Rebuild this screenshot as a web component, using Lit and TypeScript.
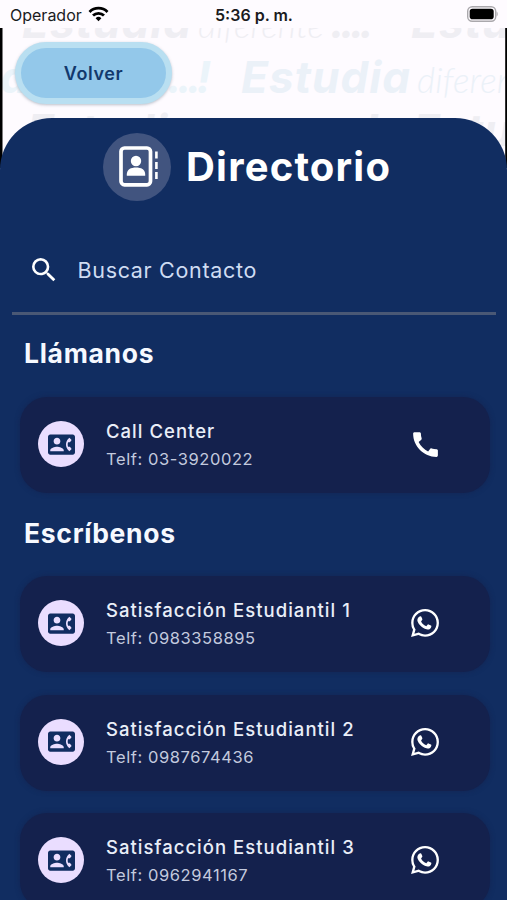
import { LitElement, html, svg, css } from "lit";
import { customElement, property } from "lit/decorators.js";

interface Contact {
  name: string;
  phone: string;
  kind: "call" | "whatsapp";
}

const CALLS: Contact[] = [{ name: "Call Center", phone: "03-3920022", kind: "call" }];

const CHATS: Contact[] = [
  { name: "Satisfacción Estudiantil 1", phone: "0983358895", kind: "whatsapp" },
  { name: "Satisfacción Estudiantil 2", phone: "0987674436", kind: "whatsapp" },
  { name: "Satisfacción Estudiantil 3", phone: "0962941167", kind: "whatsapp" },
];

const contactPhone = html`<svg width="30" height="30" viewBox="0 0 24 24" fill="#112d61">
  <path d="M22 3H2C.9 3 0 3.9 0 5v14c0 1.100.9 2 2 2h20c1.100 0 1.990-.9 1.990-2L24 5c0-1.100-.9-2-2-2zM8 6c1.660 0 3 1.340 3 3s-1.340 3-3 3-3-1.340-3-3 1.340-3 3-3zm6 12H2v-1c0-2 4-3.100 6-3.100s6 1.100 6 3.100v1zm3.850-4h1.640L21 16l-1.990 1.990c-1.310-.98-2.280-2.380-2.730-3.990-.18-.64-.28-1.310-.28-2s.1-1.360.28-2c.45-1.620 1.420-3.010 2.730-3.990L21 8l-1.510 2h-1.640c-.22.63-.35 1.300-.35 2s.13 1.370.35 2z"/>
</svg>`;

const callIcon = html`<svg width="33" height="33" viewBox="0 0 24 24" fill="#fff">
  <path d="M20.010 15.380c-1.230 0-2.420-.2-3.530-.56-.35-.12-.74-.03-1.010.24l-1.570 1.970c-2.830-1.350-5.480-3.900-6.890-6.830l1.950-1.660c.27-.28.35-.67.24-1.020-.37-1.110-.56-2.300-.56-3.530 0-.54-.45-.99-.99-.99H4.190C3.650 3 3 3.240 3 3.990 3 13.280 10.730 21 20.010 21c.71 0 .99-.63.99-1.180v-3.450c0-.54-.45-.99-.99-.99z"/>
</svg>`;

const whatsappIcon = html`<svg width="28" height="28" viewBox="0 0 24 24" fill="#fff">
  <path d="M.057 24l1.687-6.163a11.867 11.867 0 0 1-1.587-5.946C.160 5.335 5.495 0 12.050 0a11.817 11.817 0 0 1 8.413 3.488 11.824 11.824 0 0 1 3.480 8.414c-.003 6.557-5.338 11.892-11.893 11.892a11.900 11.900 0 0 1-5.688-1.448L.057 24zm6.597-3.807c1.676.995 3.276 1.591 5.392 1.592 5.448 0 9.886-4.434 9.889-9.885.002-5.462-4.415-9.890-9.881-9.892-5.452 0-9.887 4.434-9.889 9.884-.001 2.225.651 3.891 1.746 5.634l-.999 3.648 3.742-.981z"/>
  <path d="M8 6.200c.35-.1.700.050.850.400l.85 2.050c.1.300.050.550-.15.800l-.8 1c-.1.150-.1.300 0 .5.900 1.700 2.200 2.900 3.950 3.700.2.100.4.050.55-.1l1-1.150c.2-.25.450-.3.750-.2l2.050.950c.3.150.45.4.4.750-.2 1.800-1.700 2.800-3.300 2.650-1-.1-2.350-.5-3.900-1.500-2-1.300-3.700-3.200-4.500-5.100C4.950 8.800 6.300 6.600 8 6.200z"/>
</svg>`;

@customElement("contact-card")
export class ContactCard extends LitElement {
  @property({ attribute: false }) contact!: Contact;

  static styles = css`
    :host {
      display: block;
    }
    .card {
      box-sizing: border-box;
      height: 96px;
      display: flex;
      align-items: center;
      padding: 0 48px 2px 18px;
      border-radius: 27px;
      background: #14214d;
      box-shadow: 0 0 4px 1px rgba(20, 33, 77, 0.5);
    }
    .avatar {
      flex: none;
      width: 46px;
      height: 46px;
      border-radius: 50%;
      background: #eaddff;
      display: grid;
      place-items: center;
    }
    .avatar svg {
      width: 27px;
      height: 27px;
    }
    .text {
      flex: 1;
      margin-left: 22px;
      padding-top: 3px;
      white-space: nowrap;
    }
    .name {
      font-size: 18.500px;
      line-height: 28px;
      font-weight: 500;
      letter-spacing: 1.020px;
      color: #e9eef8;
    }
    .phone {
      font-size: 16.500px;
      line-height: 29px;
      letter-spacing: 0.580px;
      color: #c3cade;
    }
    .action {
      flex: none;
      width: 34px;
      height: 34px;
      display: grid;
      place-items: center;
    }
  `;

  render() {
    const c = this.contact;
    return html`<div class="card">
      <div class="avatar">${contactPhone}</div>
      <div class="text">
        <div class="name">${c.name}</div>
        <div class="phone">Telf: ${c.phone}</div>
      </div>
      <div class="action">${c.kind === "call" ? callIcon : whatsappIcon}</div>
    </div>`;
  }
}

const slogan = (x: number, y: number, fill: string) => svg`
  <g fill=${fill} font-style="italic">
    <text x=${x} y=${y} font-family="Inter" font-size="44" font-weight="700" textLength="169">Estudia</text>
    <text x=${x + 176} y=${y} font-size="35" font-weight="300" textLength="126">diferente</text>
    <text x=${x + 308} y=${y} font-family="Inter" font-size="44" font-weight="700" textLength="44">...!</text>
  </g>`;

@customElement("app-root")
export class AppRoot extends LitElement {
  static styles = css`
    :host {
      display: block;
      width: 507px;
      height: 900px;
      overflow: hidden;
      font-family: Inter, "Liberation Sans", sans-serif;
    }
    .screen {
      height: 900px;
      display: flex;
      flex-direction: column;
      position: relative;
      background: #fefbff;
    }
    .status {
      flex: none;
      height: 28px;
      box-sizing: border-box;
      padding: 2px 9px 0 10px;
      display: grid;
      grid-template-columns: 1fr auto 1fr;
      align-items: center;
      color: #1b1b1e;
      font-size: 16px;
      line-height: 26px;
    }
    .carrier {
      display: flex;
      align-items: center;
      gap: 6px;
    }
    .carrier svg {
      margin-top: -2px;
    }
    .clock {
      font-weight: 600;
    }
    .battery {
      justify-self: end;
      display: flex;
      margin-top: -2px;
    }
    .backdrop {
      position: absolute;
      left: 0;
      top: 28px;
      font-family: Lato, "Open Sans", sans-serif;
    }
    .toolbar {
      flex: none;
      position: relative;
      height: 90px;
      box-sizing: border-box;
      padding: 14px 0 0 15px;
    }
    .back {
      width: 157px;
      height: 62px;
      box-sizing: border-box;
      border: 6px solid #b9dff1;
      border-radius: 31px;
      background: #93c8ea;
      box-shadow: 0 1px 3px rgba(60, 80, 100, 0.35);
      font: 600 18px/50px Inter, sans-serif;
      letter-spacing: 0.6px;
      color: #12396d;
      padding: 1px 0 0;
    }
    .panel {
      flex: 1;
      min-height: 0;
      overflow: hidden;
      position: relative;
      background: #112d61;
      border-radius: 52px 52px 0 0;
    }
    .heading {
      display: flex;
      align-items: center;
      gap: 15px;
      margin: 15px 0 0 103px;
    }
    .badge {
      width: 68px;
      height: 68px;
      border-radius: 50%;
      background: #41547f;
      display: flex;
    }
    .heading h1 {
      margin: 0;
      font-size: 40px;
      line-height: 68px;
      font-weight: 650;
      letter-spacing: 1.200px;
      color: #fff;
    }
    .search {
      box-sizing: border-box;
      height: 87px;
      margin: 27px 11px 0 12px;
      border-bottom: 3px solid #4a5875;
      padding-left: 16px;
      display: flex;
      align-items: center;
      gap: 17.500px;
      font-size: 21.500px;
      letter-spacing: 0.680px;
      color: #cfdcf2;
    }
    .search svg {
      flex: none;
      margin-top: -1px;
    }
    h2 {
      margin: 0 0 0 24px;
      font-size: 26.500px;
      line-height: 32px;
      font-weight: 650;
      letter-spacing: 0.700px;
      color: #f6f9ff;
    }
    .calls-title {
      margin-top: 22px;
    }
    .chats-title {
      margin-top: 24px;
    }
    .list {
      display: flex;
      flex-direction: column;
      gap: 22.700px;
      margin: 28px 17px 0 20px;
    }
    .chats {
      margin-top: 27px;
    }
  `;

  render() {
    return html`<div class="screen">
      <div class="status">
        <div class="carrier">
          <span>Operador</span>
          <svg width="21" height="16" viewBox="0 0 21 16" fill="none" stroke="#000" stroke-width="2.800">
            <path d="M1.500 5.900a12.800 12.800 0 0 1 18 0" />
            <path d="M5 9.600a7.800 7.800 0 0 1 11 0" />
            <path d="M10.500 15.200l-2.900-3a4.100 4.100 0 0 1 5.800 0z" fill="#000" stroke="none" />
          </svg>
        </div>
        <div class="clock">5:36 p. m.</div>
        <svg class="battery" width="33" height="16" viewBox="0 0 33 16">
          <rect x="2.700" y=".8" width="28" height="14.400" rx="4.500" fill="none" stroke="#aaa8ac" stroke-width="1.400" />
          <rect x="4.700" y="2.800" width="24" height="10.400" rx="2.800" fill="#000" />
          <path d="M31.600 5.600c1.500.7 1.500 4.100 0 4.800z" fill="#aaa8ac" />
        </svg>
      </div>
      <svg class="backdrop" width="507" height="140" viewBox="0 28 507 140">
        ${slogan(22, 38, "#efeef3")} ${slogan(411, 38, "#efeef3")}
        ${slogan(-141, 93, "#ebf4fa")} ${slogan(241, 93, "#ebf1f8")}
        ${slogan(27, 146, "#efeef3")} ${slogan(413, 146, "#efeef3")}
        <rect x="0" y="28" width="2.500" height="140" fill="#000" />
        <rect x="505.200" y="28" width="1.800" height="140" fill="#000" />
      </svg>
      <div class="toolbar"><button class="back">Volver</button></div>
      <main class="panel">
        <div class="heading">
          <div class="badge">
            <svg width="68" height="68" viewBox="0 0 68 68" fill="#fff">
              <rect x="18" y="15" width="29.500" height="36.800" rx="3.500" fill="none" stroke="#fff" stroke-width="3.700" />
              <circle cx="33" cy="28" r="5.200" />
              <path d="M23.800 42.800v-1.300c0-5 4.200-6.900 9.200-6.900s9.200 1.900 9.200 6.900v1.300z" />
              <path d="M53.400 18.500v7M53.400 29v7M53.400 39v7" stroke="#fff" stroke-width="2.600" />
            </svg>
          </div>
          <h1>Directorio</h1>
        </div>
        <div class="search">
          <svg width="32" height="32" viewBox="0 0 24 24" fill="#fff">
            <path d="M15.500 14h-.79l-.28-.27A6.471 6.471 0 0 0 16 9.500 6.500 6.500 0 1 0 9.500 16c1.610 0 3.090-.59 4.230-1.570l.27.28v.79l5 4.990L20.490 19l-4.990-5zm-6 0C7.010 14 5 11.990 5 9.500S7.010 5 9.500 5 14 7.010 14 9.500 11.990 14 9.500 14z" />
          </svg>
          <span>Buscar Contacto</span>
        </div>
        <h2 class="calls-title">Llámanos</h2>
        <div class="list">${CALLS.map((c) => html`<contact-card .contact=${c}></contact-card>`)}</div>
        <h2 class="chats-title">Escríbenos</h2>
        <div class="list chats">${CHATS.map((c) => html`<contact-card .contact=${c}></contact-card>`)}</div>
      </main>
    </div>`;
  }
}
